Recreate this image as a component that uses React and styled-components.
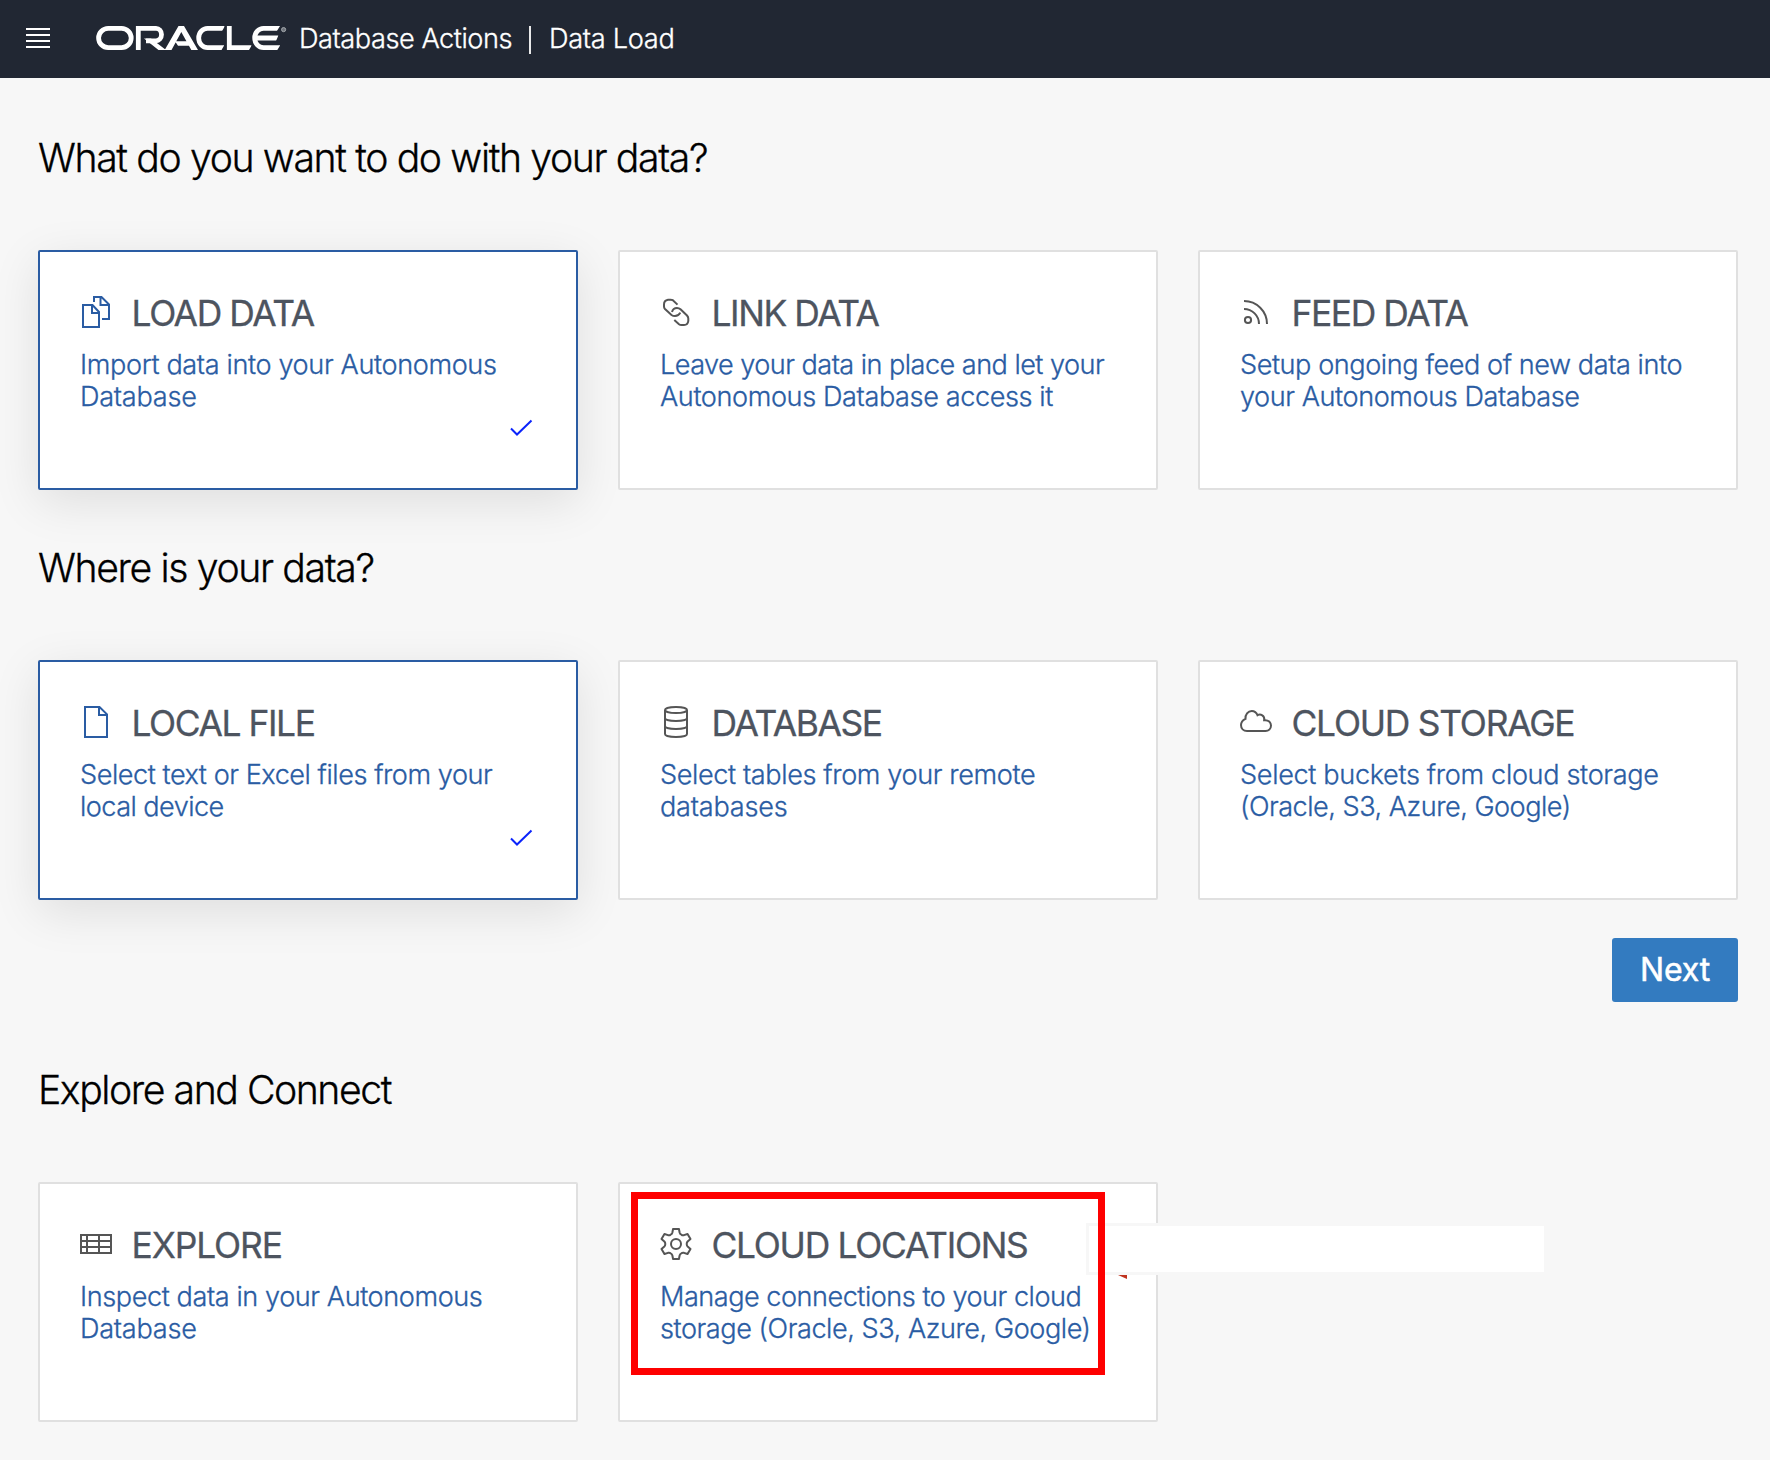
import React from "react";
import styled, { createGlobalStyle } from "styled-components";

const GlobalStyle = createGlobalStyle`
  *, *::before, *::after { box-sizing: border-box; }
  body {
    margin: 0;
    background: #f7f7f7;
    font-family: Inter, "Liberation Sans", sans-serif;
    color: #000;
  }
`;

const Page = styled.div`
  min-height: 1460px;
  background: #f7f7f7;
`;

const Header = styled.header`
  display: flex;
  align-items: center;
  height: 78px;
  padding-left: 26px;
  background: #212733;
  color: #fff;
`;

const MenuButton = styled.button`
  display: flex;
  flex-direction: column;
  gap: 4px;
  width: 24px;
  margin: 0 46px 2px 0;
  padding: 0;
  border: 0;
  background: none;
`;

const MenuLine = styled.span`
  height: 2px;
  background: #fff;
`;

const Logo = styled.svg`
  flex: none;
  width: 192px;
  height: 24px;
  margin-right: 11px;
  margin-bottom: 2px;
`;

const HeaderText = styled.span`
  font-size: 27.2px;
  font-weight: 300;
  line-height: 32px;
  letter-spacing: ${(p) => p.$track}px;
  white-space: nowrap;
  -webkit-text-stroke: 0.3px currentColor;
`;

const HeaderDivider = styled.span`
  width: 2px;
  height: 28px;
  margin: 1px 18px 0 17px;
  background: #e8e9ea;
`;

const Main = styled.main`
  display: flex;
  flex-direction: column;
  padding: 56px 32px 0 38px;
`;

const Section = styled.section`
  display: flex;
  flex-direction: column;
  gap: 68px;
  margin-bottom: ${(p) => p.$after || 0}px;
`;

const SectionTitle = styled.h2`
  margin: 0;
  font-size: 39.2px;
  font-weight: 300;
  line-height: 48px;
  letter-spacing: ${(p) => p.$track}px;
  -webkit-text-stroke: 0.3px currentColor;
`;

const CardGrid = styled.div`
  display: grid;
  grid-template-columns: repeat(3, 540px);
  gap: 40px;
`;

const CardBox = styled.article`
  position: relative;
  height: 240px;
  padding: 40px 38px 0 40px;
  border: 2px solid ${(p) => (p.$selected ? "#2a5ca3" : "#e0e0e0")};
  border-radius: 2px;
  background: #fff;
  box-shadow: ${(p) => (p.$selected ? "0 12px 48px rgba(0, 0, 0, 0.1)" : "none")};
`;

const CardHead = styled.div`
  display: flex;
  align-items: center;
  gap: 19.5px;
  height: 44px;
  color: ${(p) => (p.$selected ? "#2a5ca3" : "#555")};
`;

const CardIcon = styled.svg`
  flex: none;
  width: 32px;
  height: 32px;
  margin-bottom: 4px;
  fill: none;
  stroke: currentColor;
  stroke-width: 2;
`;

const CardTitle = styled.h3`
  margin: 0;
  font-size: 35.4px;
  font-weight: 400;
  line-height: 44px;
  letter-spacing: ${(p) => p.$track}px;
  white-space: nowrap;
  color: #4d545f;
  -webkit-text-stroke: 0.3px currentColor;
`;

const CardLine = styled.span`
  display: block;
  letter-spacing: ${(p) => p.$track}px;
  white-space: nowrap;
`;

const CardText = styled.p`
  margin: 13px 0 0;
  font-size: 27.1px;
  font-weight: 300;
  line-height: 32px;
  color: #2a5ca3;
  -webkit-text-stroke: 0.3px currentColor;
`;

const CheckRow = styled.div`
  display: flex;
  justify-content: flex-end;
  margin-top: -1px;
`;

const CheckIcon = styled.svg`
  width: 32px;
  height: 32px;
  margin-right: 1px;
  fill: none;
  stroke: #0b24fb;
  stroke-width: 2;
`;

const Actions = styled.div`
  display: flex;
  justify-content: flex-end;
  margin-bottom: 64px;
`;

const NextButton = styled.button`
  width: 126px;
  height: 64px;
  padding: 0;
  border: 0;
  border-radius: 3px;
  background: #337bc0;
  color: #fff;
  font: 400 32px/64px Inter, "Liberation Sans", sans-serif;
  letter-spacing: -0.2px;
  -webkit-text-stroke: 0.5px currentColor;
`;

const Blank = styled.div`
  position: absolute;
  left: 466px;
  top: 39px;
  width: 461px;
  height: 52px;
  border: 3px solid #f7f7f7;
  background: #fff;
`;

const ArrowTip = styled.svg`
  position: absolute;
  left: 498px;
  top: 91px;
  width: 9px;
  height: 4px;
`;

const Highlight = styled.div`
  position: absolute;
  left: 11px;
  top: 8px;
  width: 474px;
  height: 183px;
  border: 7px solid #fe0000;
`;

function gearPath() {
  const at = (deg, r) => {
    const a = ((deg - 90) * Math.PI) / 180;
    return `${(16 + r * Math.cos(a)).toFixed(2)} ${(16 + r * Math.sin(a)).toFixed(2)}`;
  };
  let d = "";
  for (let i = 0; i < 6; i++) {
    const c = i * 60;
    d += `${i ? "L" : "M"}${at(c - 11, 15.3)}L${at(c + 11, 15.3)}L${at(c + 18, 11.9)}`;
    d += `Q${at(c + 23, 10.6)} ${at(c + 30, 10.8)}Q${at(c + 37, 10.6)} ${at(c + 42, 11.9)}`;
  }
  return d + "Z";
}

const icons = {
  copy: <path d="M3 9H12.5L19 16V31H3ZM12 9V17H19M14 6V1H21.5L29 8.5V23H22M20.5 1V9H29" />,
  link: (
    <path d="M17.5 8.6L12.9 4.2Q12 3.7 10.5 3.7H8Q4 4.3 4 8.5V10.5Q4 12 5 13L11.5 19Q13 20 15 20Q18.5 20 20.3 16.6M12 16Q13 12 17 12Q19 12 20.5 13.3L27 19.5Q28.3 21 28.3 22.5V25Q27.8 29 24 29H21.5Q20 29 19 28.2L14.3 24" />
  ),
  feed: (
    <>
      <circle cx="8" cy="24" r="3.1" />
      <path d="M4 13A15 15 0 0 1 19 28M4 5A23 23 0 0 1 27 28" />
    </>
  ),
  file: <path d="M5 1H19.5L27 8.3V31H5ZM19 1V9H27" />,
  database: (
    <>
      <ellipse cx="16" cy="4" rx="11" ry="3" />
      <path d="M5 4V28C5 32 27 32 27 28V4M5 12C5 16 27 16 27 12M5 20C5 24 27 24 27 20" />
    </>
  ),
  cloud: (
    <path d="M7 25C3.5 25 1 22.5 1 19C1 16 3 14 5.5 12.8C5 8.5 8 5 11.8 5C14.5 5 16.5 6.7 17.5 9.2C20.5 7.5 25 9.5 24.2 14.2C28.5 13.7 31 16.5 31 19.6C31 23 28.5 25 25.5 25Z" />
  ),
  table: <path d="M1 7H31V25H1ZM1 13H31M1 19H31M7 7V25M19 7V25" />,
  gear: (
    <>
      <path d={gearPath()} strokeLinejoin="round" />
      <circle cx="16" cy="16" r="5" />
    </>
  ),
};

function Card({ icon, title, track, lines, selected, children }) {
  return (
    <CardBox $selected={selected}>
      <CardHead $selected={selected}>
        <CardIcon viewBox="0 0 32 32">{icons[icon]}</CardIcon>
        <CardTitle $track={track}>{title}</CardTitle>
      </CardHead>
      <CardText>
        {lines.map(([text, t]) => (
          <CardLine key={text} $track={t}>{text}</CardLine>
        ))}
      </CardText>
      {selected && (
        <CheckRow>
          <CheckIcon viewBox="0 0 32 32">
            <path d="M6 16.5L12 22.5L26.5 8.5" />
          </CheckIcon>
        </CheckRow>
      )}
      {children}
    </CardBox>
  );
}

function OracleLogo() {
  return (
    <Logo viewBox="0 0 192 24" role="img" aria-label="Oracle">
      <g fill="none" stroke="#fff" strokeWidth="4.8">
        <rect x="2.6" y="2.4" width="32.6" height="19.2" rx="9.6" />
        <path d="M42.3 24V2.4H60A5.5 6.2 0 0 1 60 14.8H50" />
        <path d="M128.5 2.4H111.5A8.8 9.6 0 0 0 111.5 21.6H128" />
        <path d="M133.3 0V21.6H155.5" />
        <path d="M184 2.4H167.5A8.8 9.6 0 0 0 167.5 21.6H184M160 12H182.5" />
      </g>
      <path
        fill="#fff"
        d="M48 12.4H55L70 24H62.5ZM68.7 24L82.5 0H88L102 24H95.3L85.3 6L75.5 24ZM79 15.2H92L95 19.8H82Z"
      />
      <path fill="#212733" d="M129 0L125.5 6H130V0ZM156.5 24V18L153 24ZM184 0L180.3 6H185V0ZM185 24V18L181.3 24ZM129 24V18L125.5 24ZM183 8L180 15H184Z" />
      <circle cx="187.6" cy="3.6" r="2.1" fill="#6f747c" stroke="#b4b7bb" strokeWidth="0.8" />
    </Logo>
  );
}

export default function App() {
  return (
    <Page>
      <GlobalStyle />
      <Header>
        <MenuButton aria-label="Menu">
          <MenuLine />
          <MenuLine />
          <MenuLine />
          <MenuLine />
        </MenuButton>
        <OracleLogo />
        <HeaderText $track={-0.48}>Database Actions</HeaderText>
        <HeaderDivider />
        <HeaderText $track={-0.33}>Data Load</HeaderText>
      </Header>
      <Main>
        <Section $after={54}>
          <SectionTitle $track={-1.38}>What do you want to do with your data?</SectionTitle>
          <CardGrid>
            <Card
              selected
              icon="copy"
              title="LOAD DATA"
              track={-1.38}
              lines={[["Import data into your Autonomous", -0.37], ["Database", -0.26]]}
            />
            <Card
              icon="link"
              title="LINK DATA"
              track={-1.43}
              lines={[["Leave your data in place and let your", -0.54], ["Autonomous Database access it", -0.4]]}
            />
            <Card
              icon="feed"
              title="FEED DATA"
              track={-1.43}
              lines={[["Setup ongoing feed of new data into", -0.44], ["your Autonomous Database", -0.43]]}
            />
          </CardGrid>
        </Section>
        <Section $after={38}>
          <SectionTitle $track={-1.38}>Where is your data?</SectionTitle>
          <CardGrid>
            <Card
              selected
              icon="file"
              title="LOCAL FILE"
              track={-1.43}
              lines={[["Select text or Excel files from your", -0.46], ["local device", -0.55]]}
            />
            <Card
              icon="database"
              title="DATABASE"
              track={-1.43}
              lines={[["Select tables from your remote", -0.39], ["databases", -0.22]]}
            />
            <Card
              icon="cloud"
              title="CLOUD STORAGE"
              track={-1.24}
              lines={[["Select buckets from cloud storage", -0.34], ["(Oracle, S3, Azure, Google)", -0.5]]}
            />
          </CardGrid>
        </Section>
        <Actions>
          <NextButton>Next</NextButton>
        </Actions>
        <Section>
          <SectionTitle $track={-1.46}>Explore and Connect</SectionTitle>
          <CardGrid>
            <Card
              icon="table"
              title="EXPLORE"
              track={-1.1}
              lines={[["Inspect data in your Autonomous", -0.42], ["Database", -0.26]]}
            />
            <Card
              icon="gear"
              title="CLOUD LOCATIONS"
              track={-1.28}
              lines={[["Manage connections to your cloud", -0.49], ["storage (Oracle, S3, Azure, Google)", -0.45]]}
            >
              <Blank />
              <ArrowTip viewBox="0 0 9 4">
                <path d="M0 0H9V4Z" fill="#c0331f" />
              </ArrowTip>
              <Highlight />
            </Card>
          </CardGrid>
        </Section>
      </Main>
    </Page>
  );
}
